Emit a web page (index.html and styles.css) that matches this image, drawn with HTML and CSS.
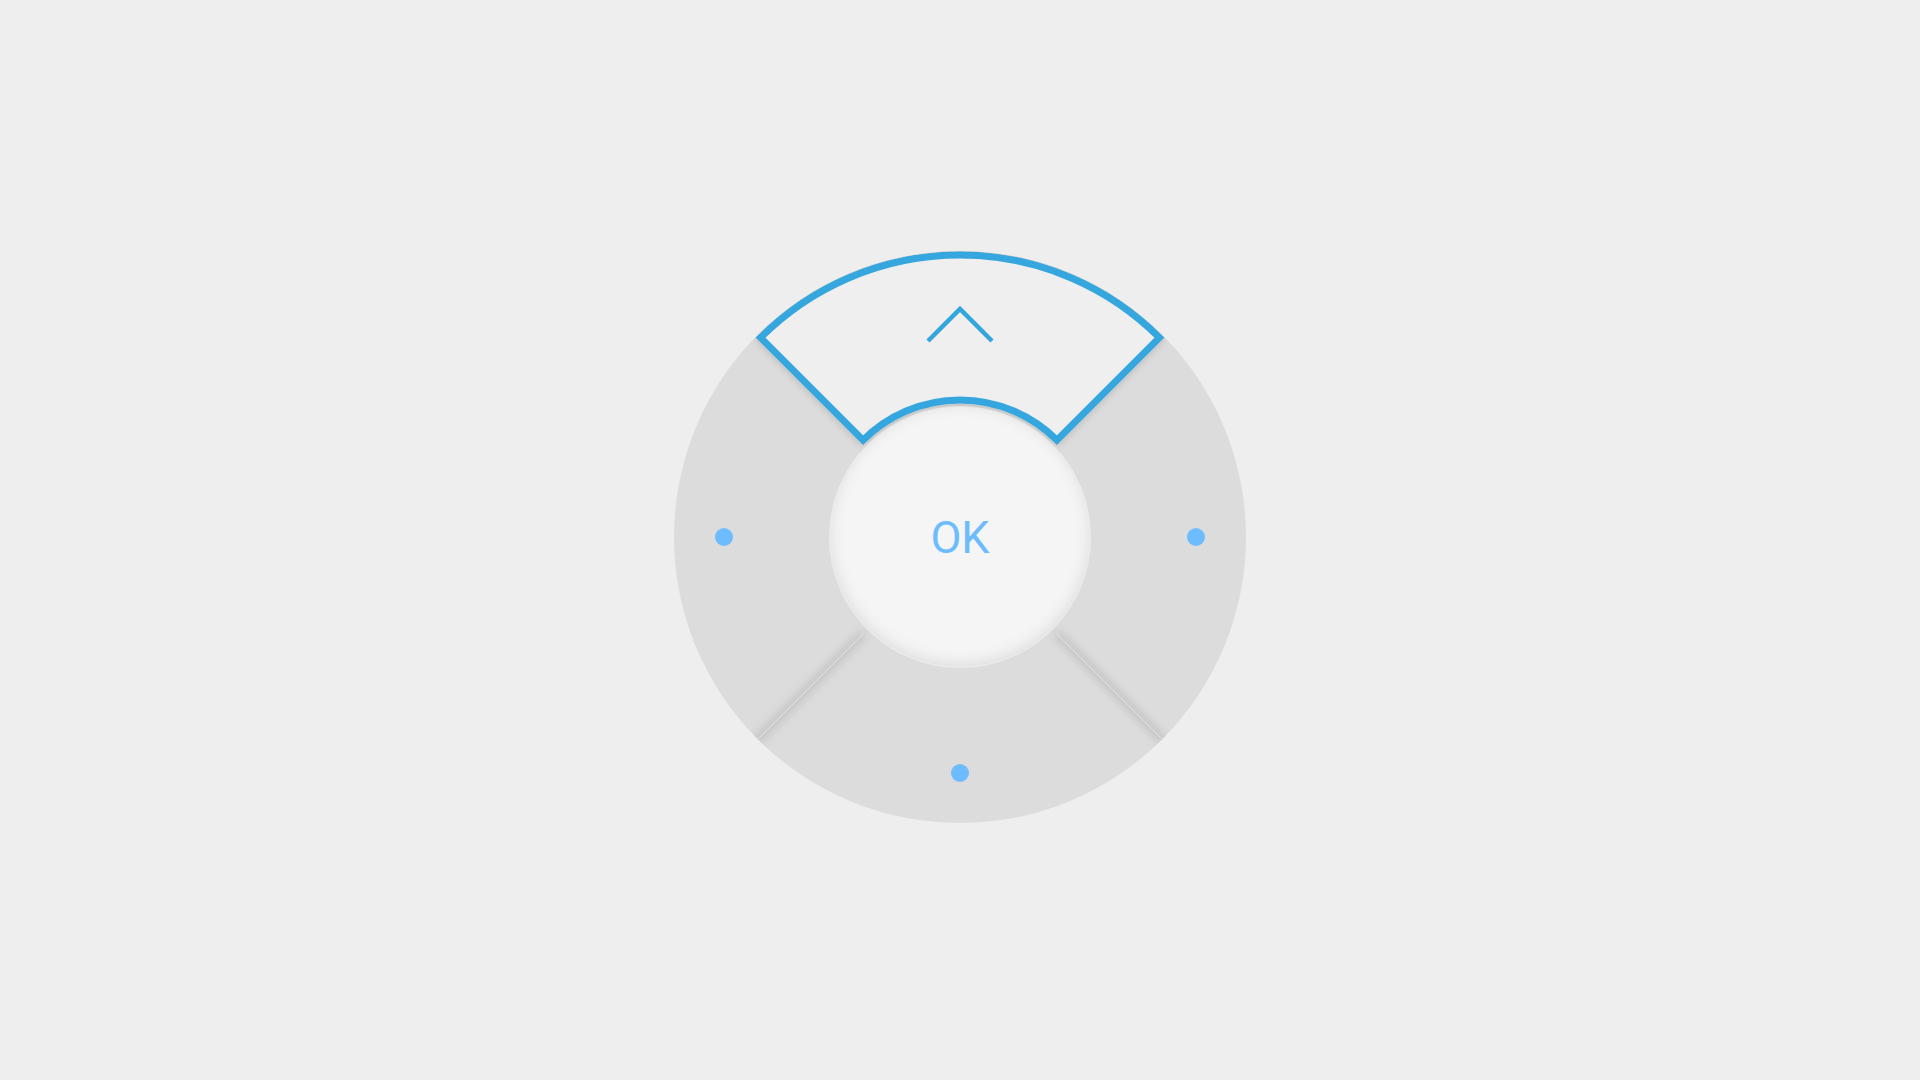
FILE: index.html
```html
<!DOCTYPE html>
<html lang="en">
<head>
<meta charset="utf-8">
<title>D-pad</title>
<link rel="stylesheet" href="styles.css">
</head>
<body>
<div class="dpad">
  <svg class="ring" width="572" height="572" viewBox="0 0 572 572">
    <defs>
      <clipPath id="disc"><circle cx="286" cy="286" r="286"/></clipPath>
      <filter id="soft" x="-20%" y="-20%" width="140%" height="140%">
        <feGaussianBlur stdDeviation="5"/>
      </filter>
      <filter id="lift" x="-20%" y="-20%" width="140%" height="140%">
        <feDropShadow dx="0" dy="0" stdDeviation="5" flood-color="#000" flood-opacity="0.2"/>
      </filter>
    </defs>
    <circle class="disc" cx="286" cy="286" r="286"/>
    <g clip-path="url(#disc)">
      <g class="sep-shadow" filter="url(#soft)">
        <line x1="190" y1="382" x2="60" y2="512"/>
        <line x1="382" y1="382" x2="512" y2="512"/>
      </g>
      <g class="sep-line">
        <line x1="190" y1="382" x2="60" y2="512"/>
        <line x1="382" y1="382" x2="512" y2="512"/>
      </g>
      <path class="seg-active" filter="url(#lift)" d="M 86.6 86.6 A 282 282 0 0 1 485.4 86.6 L 382.9 189.1 A 137 137 0 0 0 189.1 189.1 Z"/>
    </g>
    <polyline class="chevron" points="254,90 286,58 318,90"/>
    <circle class="dot" cx="50" cy="286" r="9"/>
    <circle class="dot" cx="522" cy="286" r="9"/>
    <circle class="dot" cx="286" cy="522" r="9"/>
  </svg>
  <div class="ok">OK</div>
</div>
</body>
</html>
```

FILE: styles.css
```css
html, body {
  margin: 0;
  padding: 0;
}
body {
  background: #eeeeee;
  height: 1080px;
  box-sizing: border-box;
  padding-bottom: 6px;
  display: flex;
  align-items: center;
  justify-content: center;
  font-family: Roboto, "Liberation Sans", sans-serif;
}
.dpad {
  display: grid;
  place-items: center;
  width: 572px;
  height: 572px;
}
.ring {
  grid-area: 1 / 1;
  display: block;
}
.disc {
  fill: #dcdcdc;
}
.sep-shadow line {
  stroke: rgba(0, 0, 0, 0.12);
  stroke-width: 8;
}
.sep-line line {
  stroke: #e2e2e2;
  stroke-width: 1;
}
.seg-active {
  fill: #efefef;
  stroke: #34a6de;
  stroke-width: 7;
  stroke-linejoin: miter;
  stroke-miterlimit: 10;
}
.chevron {
  fill: none;
  stroke: #34a6de;
  stroke-width: 4.5;
  stroke-linejoin: miter;
  stroke-linecap: butt;
}
.dot {
  fill: #6cbcff;
}
.ok {
  grid-area: 1 / 1;
  width: 260px;
  height: 260px;
  border-radius: 50%;
  background: #f5f5f5;
  box-shadow: inset 0 -3px 16px rgba(0, 0, 0, 0.1), 0 0 0 1px rgba(255, 255, 255, 0.45);
  display: flex;
  align-items: center;
  justify-content: center;
  color: #6cbcff;
  font-size: 45px;
  font-weight: 400;
  line-height: 1;
}
```
